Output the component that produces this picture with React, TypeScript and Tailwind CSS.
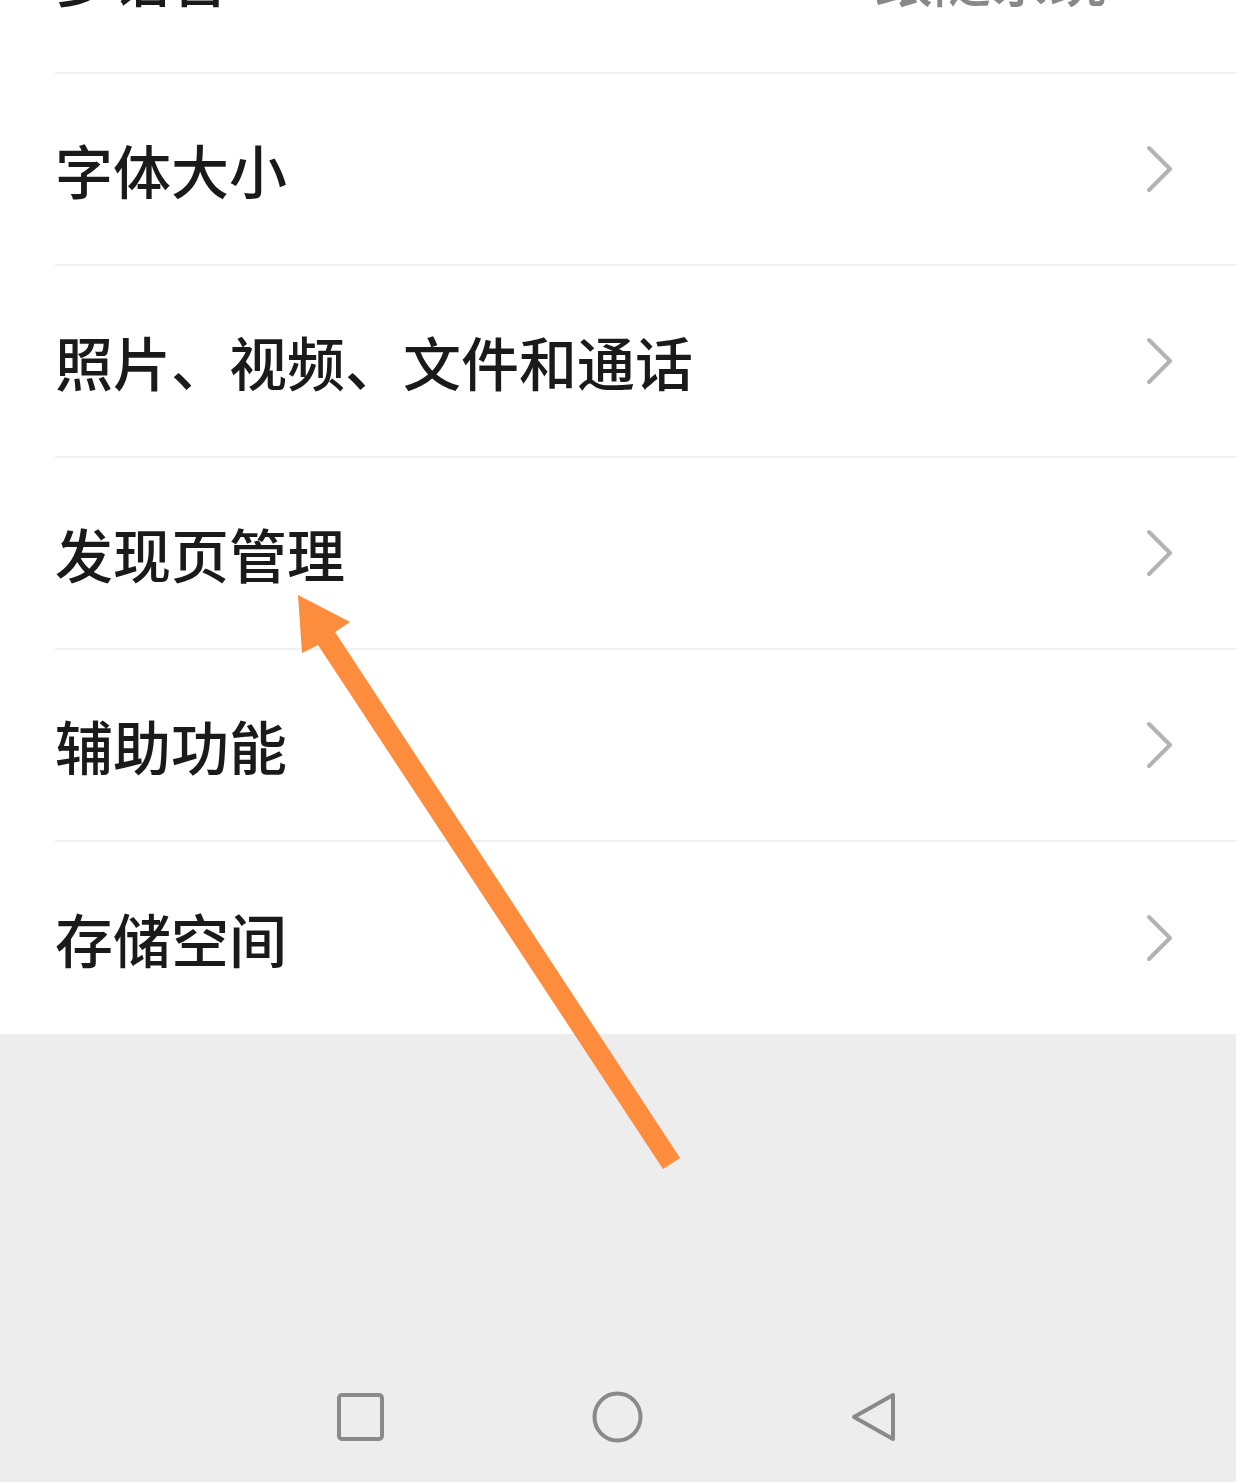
import React from "react";

const font = { fontFamily: '"Noto Sans CJK SC", "Noto Sans", sans-serif' };

function Chevron() {
  return (
    <svg width="30" height="48" viewBox="0 0 30 48" className="shrink-0">
      <path d="M4 3 L25 24 L4 45" fill="none" stroke="#b3b3b3" strokeWidth="4" strokeLinecap="round" strokeLinejoin="round" />
    </svg>
  );
}

function Row({ label, value, last }: { label: string; value?: string; last?: boolean }) {
  return (
    <div className={`flex h-[192px] items-center pr-[61px] ${last ? "" : "border-b-2 border-[#f0f0f0]"}`}>
      <span className="flex-1 text-[58px] font-medium leading-none text-[#1a1a1a]">{label}</span>
      {value && <span className="mr-[38px] text-[58px] font-medium leading-none text-[#888888]">{value}</span>}
      <Chevron />
    </div>
  );
}

export default function App() {
  const items = ["字体大小", "照片、视频、文件和通话", "发现页管理", "辅助功能", "存储空间"];
  return (
    <div className="relative h-[1482px] w-[1236px] overflow-hidden bg-[#ededed]" style={font}>
      <div className="-mt-[118px] bg-white pl-[55px]">
        <Row label="多语言" value="跟随系统" />
        {items.map((t, i) => (
          <Row key={t} label={t} last={i === items.length - 1} />
        ))}
      </div>
      <div className="absolute bottom-0 left-0 right-0 flex h-[130px] items-start justify-center pt-[28px]">
        <svg width="1236" height="60" viewBox="0 1380 1236 60" className="overflow-visible">
          <rect x="339" y="1395" width="43" height="44" rx="3" fill="none" stroke="#8a8a8a" strokeWidth="4" />
          <ellipse cx="617.5" cy="1417" rx="23" ry="23.5" fill="none" stroke="#8a8a8a" strokeWidth="4" />
          <path d="M893 1395 L893 1439 L854 1417 Z" fill="none" stroke="#8a8a8a" strokeWidth="4" strokeLinejoin="round" />
        </svg>
      </div>
      <svg className="pointer-events-none absolute left-0 top-0" width="1236" height="1482" viewBox="0 0 1236 1482">
        <polygon
          points="663,1169 318,645 302,653 298,595 350,622 335,632 680,1158"
          fill="#fd8d3c"
        />
      </svg>
    </div>
  );
}
